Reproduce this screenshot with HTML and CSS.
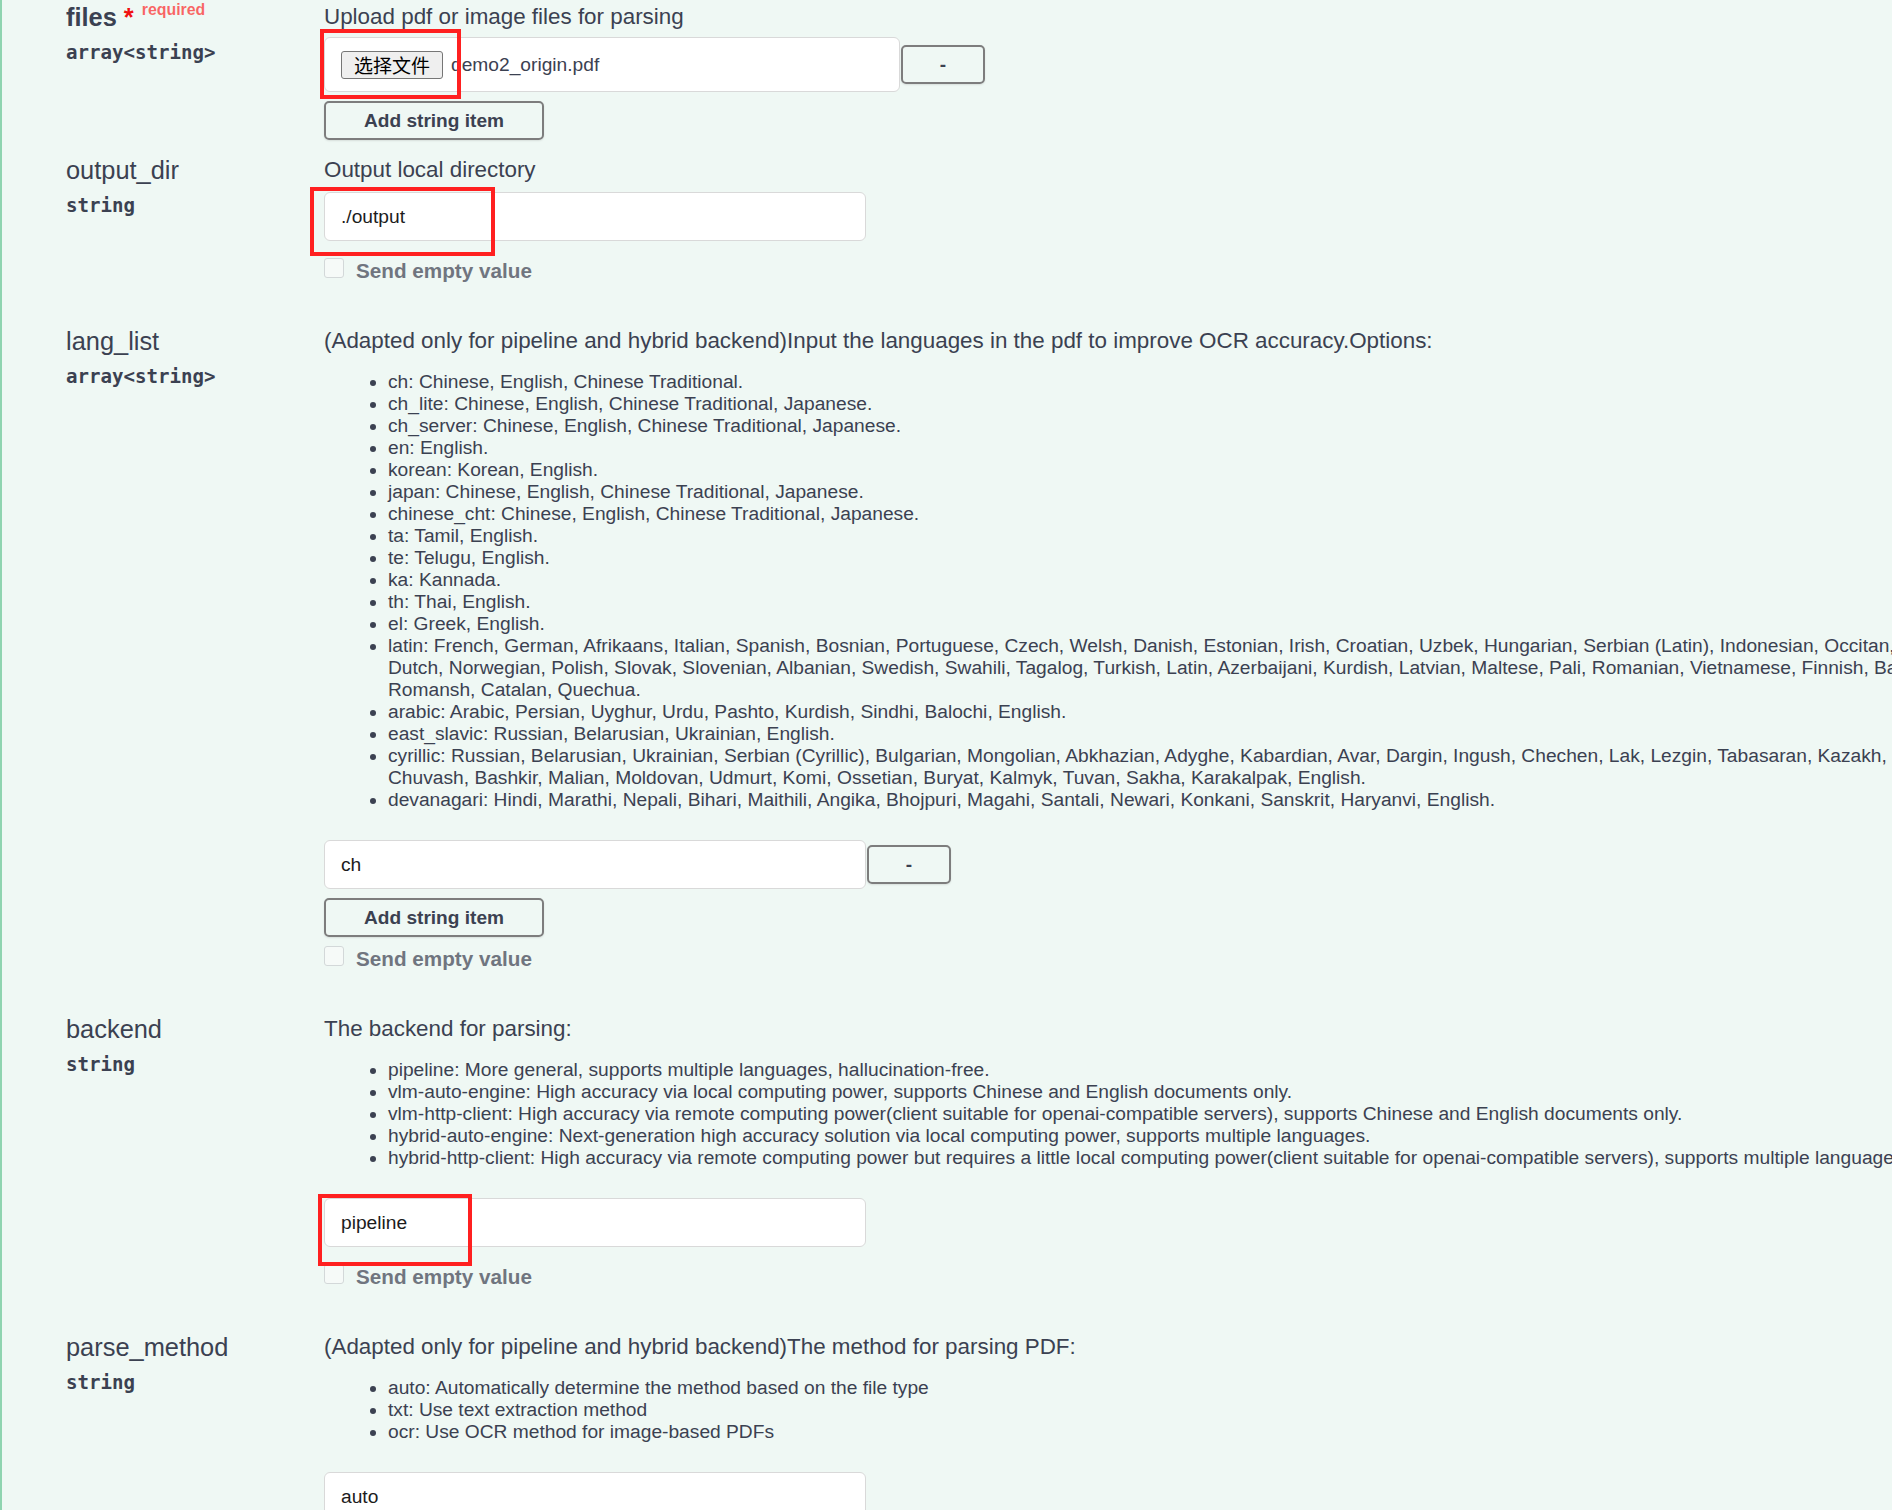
FILE: index.html
```html
<!DOCTYPE html>
<html lang="en">
<head>
<meta charset="utf-8">
<title>Parameters</title>
<link rel="stylesheet" href="styles.css">
</head>
<body>
<div class="opblock">

  <div class="param-row first">
    <div class="name-col">
      <div class="param-name required">files<span class="star">&nbsp;*</span><span class="req">required</span></div>
      <div class="param-type">array&lt;string&gt;</div>
    </div>
    <div class="desc-col">
      <p class="desc">Upload pdf or image files for parsing</p>
      <div class="array-item">
        <div class="file-input">
          <button class="file-btn" type="button">选择文件</button><span class="file-name">demo2_origin.pdf</span>
          <span class="annot annot-files"></span>
        </div>
        <button class="btn btn-remove" type="button">-</button>
      </div>
      <button class="btn btn-add" type="button">Add string item</button>
    </div>
  </div>

  <div class="param-row">
    <div class="name-col">
      <div class="param-name">output_dir</div>
      <div class="param-type">string</div>
    </div>
    <div class="desc-col">
      <p class="desc">Output local directory</p>
      <div class="field">
        <input class="text-input" type="text" value="./output">
        <span class="annot annot-output"></span>
      </div>
      <label class="empty-toggle"><input type="checkbox" class="check" disabled><span class="toggle-label">Send empty value</span></label>
    </div>
  </div>

  <div class="param-row">
    <div class="name-col">
      <div class="param-name">lang_list</div>
      <div class="param-type">array&lt;string&gt;</div>
    </div>
    <div class="desc-col">
      <p class="desc">(Adapted only for pipeline and hybrid backend)Input the languages in the pdf to improve OCR accuracy.Options:</p>
      <ul class="desc-list">
        <li>ch: Chinese, English, Chinese Traditional.</li>
        <li>ch_lite: Chinese, English, Chinese Traditional, Japanese.</li>
        <li>ch_server: Chinese, English, Chinese Traditional, Japanese.</li>
        <li>en: English.</li>
        <li>korean: Korean, English.</li>
        <li>japan: Chinese, English, Chinese Traditional, Japanese.</li>
        <li>chinese_cht: Chinese, English, Chinese Traditional, Japanese.</li>
        <li>ta: Tamil, English.</li>
        <li>te: Telugu, English.</li>
        <li>ka: Kannada.</li>
        <li>th: Thai, English.</li>
        <li>el: Greek, English.</li>
        <li>latin: French, German, Afrikaans, Italian, Spanish, Bosnian, Portuguese, Czech, Welsh, Danish, Estonian, Irish, Croatian, Uzbek, Hungarian, Serbian (Latin), Indonesian, Occitan, Icelandic, Lithuanian, Maori, Malay,<br>Dutch, Norwegian, Polish, Slovak, Slovenian, Albanian, Swedish, Swahili, Tagalog, Turkish, Latin, Azerbaijani, Kurdish, Latvian, Maltese, Pali, Romanian, Vietnamese, Finnish, Basque, Galician, Luxembourgish,<br>Romansh, Catalan, Quechua.</li>
        <li>arabic: Arabic, Persian, Uyghur, Urdu, Pashto, Kurdish, Sindhi, Balochi, English.</li>
        <li>east_slavic: Russian, Belarusian, Ukrainian, English.</li>
        <li>cyrillic: Russian, Belarusian, Ukrainian, Serbian (Cyrillic), Bulgarian, Mongolian, Abkhazian, Adyghe, Kabardian, Avar, Dargin, Ingush, Chechen, Lak, Lezgin, Tabasaran, Kazakh, Kyrgyz, Tajik, Macedonian, Tatar,<br>Chuvash, Bashkir, Malian, Moldovan, Udmurt, Komi, Ossetian, Buryat, Kalmyk, Tuvan, Sakha, Karakalpak, English.</li>
        <li>devanagari: Hindi, Marathi, Nepali, Bihari, Maithili, Angika, Bhojpuri, Magahi, Santali, Newari, Konkani, Sanskrit, Haryanvi, English.</li>
      </ul>
      <div class="array-item">
        <input class="text-input" type="text" value="ch">
        <button class="btn btn-remove" type="button">-</button>
      </div>
      <button class="btn btn-add" type="button">Add string item</button>
      <label class="empty-toggle"><input type="checkbox" class="check" disabled><span class="toggle-label">Send empty value</span></label>
    </div>
  </div>

  <div class="param-row">
    <div class="name-col">
      <div class="param-name">backend</div>
      <div class="param-type">string</div>
    </div>
    <div class="desc-col">
      <p class="desc">The backend for parsing:</p>
      <ul class="desc-list">
        <li>pipeline: More general, supports multiple languages, hallucination-free.</li>
        <li>vlm-auto-engine: High accuracy via local computing power, supports Chinese and English documents only.</li>
        <li>vlm-http-client: High accuracy via remote computing power(client suitable for openai-compatible servers), supports Chinese and English documents only.</li>
        <li>hybrid-auto-engine: Next-generation high accuracy solution via local computing power, supports multiple languages.</li>
        <li>hybrid-http-client: High accuracy via remote computing power but requires a little local computing power(client suitable for openai-compatible servers), supports multiple languages.</li>
      </ul>
      <div class="field">
        <input class="text-input" type="text" value="pipeline">
        <span class="annot annot-backend"></span>
      </div>
      <label class="empty-toggle"><input type="checkbox" class="check" disabled><span class="toggle-label">Send empty value</span></label>
    </div>
  </div>

  <div class="param-row">
    <div class="name-col">
      <div class="param-name">parse_method</div>
      <div class="param-type">string</div>
    </div>
    <div class="desc-col">
      <p class="desc">(Adapted only for pipeline and hybrid backend)The method for parsing PDF:</p>
      <ul class="desc-list">
        <li>auto: Automatically determine the method based on the file type</li>
        <li>txt: Use text extraction method</li>
        <li>ocr: Use OCR method for image-based PDFs</li>
      </ul>
      <div class="field">
        <input class="text-input" type="text" value="auto">
      </div>
      <label class="empty-toggle"><input type="checkbox" class="check" disabled><span class="toggle-label">Send empty value</span></label>
    </div>
  </div>

</div>
</body>
</html>
```

FILE: styles.css
```css
html, body {
  margin: 0;
  padding: 0;
  overflow: hidden;
}

body {
  width: 1892px;
  height: 1510px;
  background: #eff8f4;
  color: #3b4151;
  font-family: "Liberation Sans", Arial, sans-serif;
}

.opblock {
  box-sizing: border-box;
  min-height: 1510px;
  border-left: 2px solid #8fd4b0;
  padding-left: 64px;
}

.param-row {
  display: grid;
  grid-template-columns: 258px max-content;
  padding-top: 13px;
}

.param-row.first {
  padding-top: 0;
}

/* name column */
.param-name {
  font-size: 25.4px;
  line-height: 34px;
  white-space: nowrap;
}

.param-name.required {
  font-weight: 700;
}

.star {
  color: #f01010;
}

.req {
  position: relative;
  top: -11.5px;
  padding-left: 8px;
  font-size: 15.9px;
  line-height: 0;
  font-weight: 700;
  color: rgba(255, 0, 0, 0.6);
}

.param-type {
  padding-top: 7px;
  font-family: "DejaVu Sans Mono", "Liberation Mono", monospace;
  font-weight: 700;
  font-size: 19.1px;
}

/* description column */
.desc {
  margin: 0;
  font-size: 22.4px;
  line-height: 33px;
  white-space: nowrap;
}

.desc-list {
  margin: 14px 0 29px;
  padding-left: 64px;
  font-size: 19.2px;
  line-height: 22px;
  white-space: nowrap;
}

.array-item {
  display: flex;
  align-items: center;
  margin-top: 4px;
}

.file-input {
  position: relative;
  box-sizing: border-box;
  display: flex;
  align-items: center;
  width: 576px;
  height: 55px;
  padding-left: 16px;
  border: 1px solid #d9d9d9;
  border-radius: 6px;
  background: #fff;
}

.file-btn {
  height: 28px;
  padding: 0 12px;
  border: 1px solid #767676;
  border-radius: 3px;
  background: #efefef;
  color: #000;
  font-family: "Noto Sans CJK SC", sans-serif;
  font-size: 19px;
  line-height: 26px;
}

.file-name {
  margin-left: 8px;
  font-size: 19.2px;
  color: #3b4151;
}

.field {
  position: relative;
  width: 542px;
  margin-top: 6px;
}

.text-input {
  display: block;
  box-sizing: border-box;
  width: 542px;
  height: 49px;
  margin: 0;
  padding: 0 16px;
  border: 1px solid #d9d9d9;
  border-radius: 6px;
  background: #fff;
  color: #1c1c1c;
  font-family: "Liberation Sans", Arial, sans-serif;
  font-size: 19.2px;
}

.btn {
  box-sizing: border-box;
  border: 2px solid #7d7d7d;
  border-radius: 5px;
  background: transparent;
  box-shadow: 0 1px 2px rgba(0, 0, 0, 0.1);
  color: #3b4151;
  font-family: "Liberation Sans", Arial, sans-serif;
  font-weight: 700;
  font-size: 19.1px;
  padding: 0;
}

.btn-remove {
  width: 84px;
  height: 39px;
  margin-left: 1px;
}

.btn-add {
  display: block;
  width: 220px;
  height: 39px;
  margin-top: 9px;
}

/* send empty value */
.empty-toggle {
  display: flex;
  align-items: flex-end;
  gap: 12px;
  height: 20px;
  margin-bottom: 33px;
}

.field + .empty-toggle {
  margin-top: 17px;
}

.btn-add + .empty-toggle {
  margin-top: 9px;
}

.check {
  -webkit-appearance: none;
  appearance: none;
  box-sizing: border-box;
  flex-shrink: 0;
  width: 20px;
  height: 20px;
  margin: 0;
  border: 1px solid #d3d8d9;
  border-radius: 3px;
  background: #f6faf8;
}

.toggle-label {
  margin-bottom: -3px;
  font-size: 20.7px;
  font-weight: 700;
  line-height: 20px;
  color: #70757f;
  white-space: nowrap;
}

/* red annotation frames drawn over the screenshot */
.annot {
  position: absolute;
  box-sizing: border-box;
  border: 4px solid #ff2020;
  pointer-events: none;
}

.annot-files {
  left: -5px;
  top: -9px;
  width: 141px;
  height: 70px;
}

.annot-output {
  left: -14.5px;
  top: -5px;
  width: 185.5px;
  height: 69px;
}

.annot-backend {
  left: -6.5px;
  top: -4px;
  width: 154px;
  height: 72px;
}
```
